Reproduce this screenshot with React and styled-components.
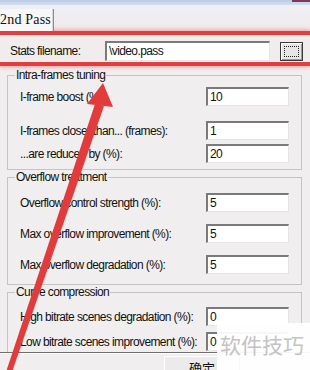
import React from "react";
import styled, { createGlobalStyle } from "styled-components";

const Global = createGlobalStyle`
  html, body { margin: 0; padding: 0; background: #f0eeee; }
  #root { width: 310px; height: 370px; }
`;

const UI_FONT = `"Liberation Sans", Arial, sans-serif`;

const Screen = styled.div`
  position: relative;
  width: 310px;
  height: 370px;
  overflow: hidden;
  background: #f0eeee;
  font-family: ${UI_FONT};
  font-size: 12px;
  letter-spacing: -0.6px;
  color: #111;
`;

const TitleStrip = styled.div`
  height: 5px;
  background: linear-gradient(#bccde4, #d3deee);
  display: flex;
  justify-content: flex-end;
`;

const CornerMark = styled.div`
  width: 18px;
  height: 2px;
  background: #7b3a58;
`;

const TabBar = styled.div`
  height: 26px;
  display: flex;
  align-items: flex-end;
  background: linear-gradient(#eef0f5, #f1e9ea);
`;

const Tab = styled.div`
  height: 22px;
  width: 54px;
  box-sizing: border-box;
  background: #f8f7f7;
  border-right: 1px solid #8c8c8c;
  box-shadow: inset -1px 0 0 #d8d8d8;
  font-family: "Liberation Serif", "DejaVu Serif", serif;
  font-size: 14px;
  letter-spacing: 0.2px;
  line-height: 22px;
  color: #111;
  white-space: nowrap;
`;

const Annotated = styled.div`
  border-top: 4px solid #e23d3f;
  border-bottom: 4px solid #e23d3f;
  box-shadow: 0 -2px 3px rgba(235, 120, 120, 0.45), 0 2px 3px rgba(235, 120, 120, 0.45);
  background: #f1eded;
`;

const StatsRow = styled.div`
  height: 27px;
  box-sizing: border-box;
  display: flex;
  align-items: flex-start;
  padding: 6px 0 0 10px;
`;

const StatsLabel = styled.span`
  width: 95px;
  line-height: 21px;
  white-space: nowrap;
`;

const Field = styled.div`
  width: ${(p) => p.$w}px;
  height: ${(p) => p.$h || 19}px;
  box-sizing: border-box;
  background: #fff;
  border-top: 2px solid #7a7a7a;
  border-left: 2px solid #7a7a7a;
  border-right: 1px solid #e4e4e4;
  border-bottom: 1px solid #e4e4e4;
  padding-left: 2px;
  line-height: 16px;
  white-space: nowrap;
  overflow: hidden;
  flex: none;
`;

const BrowseButton = styled.div`
  width: 23px;
  height: 19px;
  margin: 1px 0 0 10px;
  box-sizing: border-box;
  border: 1px solid #3a3a3a;
  box-shadow: inset 1px 1px 0 #fff, inset -1px -1px 0 #9a9a9a;
  background: #e6e6e6;
  display: flex;
  padding: 3px;
`;

const FocusRect = styled.div`
  flex: 1;
  border: 1px dotted #222;
`;

const Page = styled.div`
  height: 287px;
  box-sizing: border-box;
  border-bottom: 1px solid #6e6e6e;
  box-shadow: 0 1px 0 #fff;
  padding-top: 2px;
  overflow: hidden;
`;

const Group = styled.fieldset`
  margin: 0 8px 0 7px;
  border: 1px solid #c4c4c4;
  padding: ${(p) => p.$pt}px 12px ${(p) => p.$pb}px 12px;
  min-width: 0;
`;

const Legend = styled.legend`
  padding: 0 1px;
  margin-left: -5px;
  line-height: 15px;
  white-space: nowrap;
`;

const Row = styled.div`
  display: flex;
  justify-content: space-between;
  align-items: center;
  height: 19px;
  margin-top: ${(p) => p.$mt || 0}px;
`;

const RowLabel = styled.span`
  white-space: nowrap;
`;

const Footer = styled.div`
  height: 18px;
  display: flex;
  padding: 3px 0 0 164px;
`;

const OkButton = styled.div`
  width: 76px;
  height: 23px;
  box-sizing: border-box;
  border-top: 1px solid #fff;
  border-left: 1px solid #fff;
  border-right: 1px solid #707070;
  background: #eceaea;
  text-align: center;
  font-family: "Noto Sans CJK SC", sans-serif;
  font-size: 13px;
  letter-spacing: 0;
  line-height: 20px;
  padding-top: 1px;
`;

const Watermark = styled.div`
  position: absolute;
  left: 217px;
  top: 323px;
  width: 93px;
  height: 47px;
  background: rgba(255, 255, 255, 0.94);
  font-family: "Noto Sans CJK SC", sans-serif;
  font-size: 21px;
  line-height: 26px;
  color: #c3c3c3;
  padding: 8px 0 0 3px;
  box-sizing: border-box;
  letter-spacing: 0px;
  white-space: nowrap;
`;

const ArrowLayer = styled.svg`
  position: absolute;
  left: 0;
  top: 0;
  width: 310px;
  height: 370px;
  pointer-events: none;
`;

const groups = [
  {
    title: "Intra-frames tuning",
    pt: 4,
    pb: 6,
    rows: [
      { label: "I-frame boost (%):", value: "10", mt: 0 },
      { label: "I-frames closer than... (frames):", value: "1", mt: 15 },
      { label: "...are reduced by (%):", value: "20", mt: 4 },
    ],
  },
  {
    title: "Overflow treatment",
    pt: 8,
    pb: 10,
    rows: [
      { label: "Overflow control strength (%):", value: "5", mt: 0 },
      { label: "Max overflow improvement (%):", value: "5", mt: 12 },
      { label: "Max overflow degradation (%):", value: "5", mt: 12 },
    ],
  },
  {
    title: "Curve compression",
    pt: 7,
    pb: 10,
    rows: [
      { label: "High bitrate scenes degradation (%):", value: "0", mt: 0 },
      { label: "Low bitrate scenes improvement (%):", value: "0", mt: 6 },
    ],
  },
];

export default function App() {
  return (
    <>
      <Global />
      <Screen>
        <TitleStrip>
          <CornerMark />
        </TitleStrip>
        <TabBar>
          <Tab>2nd Pass</Tab>
        </TabBar>
        <Annotated>
          <StatsRow>
            <StatsLabel>Stats filename:</StatsLabel>
            <Field $w={165} $h={20}>\video.pass</Field>
            <BrowseButton>
              <FocusRect />
            </BrowseButton>
          </StatsRow>
        </Annotated>
        <Page>
          {groups.map((g) => (
            <Group key={g.title} $pt={g.pt} $pb={g.pb}>
              <Legend>{g.title}</Legend>
              {g.rows.map((r) => (
                <Row key={r.label} $mt={r.mt}>
                  <RowLabel>{r.label}</RowLabel>
                  <Field $w={83}>{r.value}</Field>
                </Row>
              ))}
            </Group>
          ))}
        </Page>
        <Footer>
          <OkButton>确定</OkButton>
        </Footer>
        <Watermark>软件技巧</Watermark>
        <ArrowLayer viewBox="0 0 310 370">
          <polygon points="103,83 87,104 113,107" fill="#e23b3b" />
          <polygon points="95,104 104,106 12,372 6,372" fill="#e23b3b" />
        </ArrowLayer>
      </Screen>
    </>
  );
}
